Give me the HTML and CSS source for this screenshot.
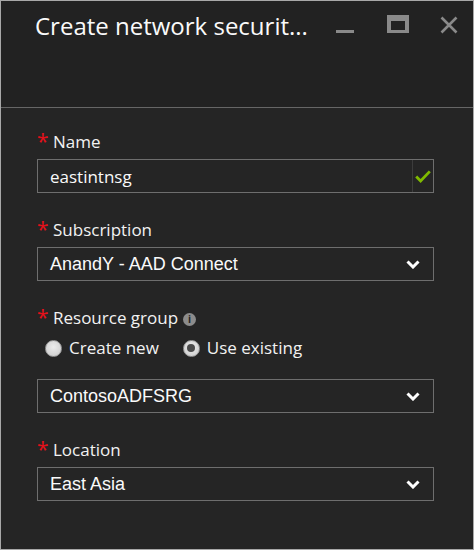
FILE: index.html
```html
<!DOCTYPE html>
<html lang="en">
<head>
<meta charset="utf-8">
<title>Create network security group</title>
<link rel="stylesheet" href="styles.css">
</head>
<body>
<div class="panel">
  <header class="header">
    <h1 class="title">Create network securit...</h1>
    <div class="controls">
      <svg class="ctl ctl-min" width="18" height="20" viewBox="0 0 18 20"><rect x="0" y="16" width="18" height="3" fill="#8a8a8a"/></svg>
      <svg class="ctl ctl-max" width="22" height="20" viewBox="0 0 22 20"><path d="M0 1h22v18H0z M4 7v9h14V7z" fill="#8a8a8a" fill-rule="evenodd"/></svg>
      <svg class="ctl ctl-close" width="18" height="20" viewBox="0 0 18 20"><path d="M1.5 3.5L16.5 18.5M16.5 3.5L1.5 18.5" stroke="#8a8a8a" stroke-width="2.6"/></svg>
    </div>
  </header>
  <main class="form">
    <div class="field">
      <label class="label"><span class="req">*</span>Name</label>
      <div class="box input">
        <span class="value name-value">eastintnsg</span>
        <span class="valid">
          <svg width="16" height="13" viewBox="0 0 16 13"><path d="M1.2 6.6L5.6 11L14.8 1.4" fill="none" stroke="#7fba00" stroke-width="2.8"/></svg>
        </span>
      </div>
    </div>
    <div class="field">
      <label class="label"><span class="req">*</span>Subscription</label>
      <div class="box select">
        <span class="value">AnandY - AAD Connect</span>
        <svg class="chev" width="14" height="9" viewBox="0 0 14 9"><path d="M1.5 1.5L7 7L12.5 1.5" fill="none" stroke="#fff" stroke-width="3"/></svg>
      </div>
    </div>
    <div class="field">
      <label class="label"><span class="req">*</span>Resource group<span class="info">i</span></label>
      <div class="radios">
        <span class="radio"><span class="dot"></span>Create new</span>
        <span class="radio checked"><span class="dot"></span>Use existing</span>
      </div>
      <div class="box select">
        <span class="value">ContosoADFSRG</span>
        <svg class="chev" width="14" height="9" viewBox="0 0 14 9"><path d="M1.5 1.5L7 7L12.5 1.5" fill="none" stroke="#fff" stroke-width="3"/></svg>
      </div>
    </div>
    <div class="field">
      <label class="label"><span class="req">*</span>Location</label>
      <div class="box select">
        <span class="value">East Asia</span>
        <svg class="chev" width="14" height="9" viewBox="0 0 14 9"><path d="M1.5 1.5L7 7L12.5 1.5" fill="none" stroke="#fff" stroke-width="3"/></svg>
      </div>
    </div>
  </main>
</div>
</body>
</html>
```
FILE: styles.css
```css
* { box-sizing: border-box; }
html, body { margin: 0; padding: 0; background: #252525; }
body { font-family: "Open Sans", "Noto Sans", sans-serif; color: #f2f2f2; }

.panel {
  width: 474px;
  height: 550px;
  border: 1px solid #a8a8a8;
  background: #252525;
  overflow: hidden;
}

.header {
  height: 107px;
  background: #222222;
  border-bottom: 1px solid #666;
  display: flex;
  align-items: flex-start;
  padding: 9px 15px 0 34px;
}
.title {
  flex: 1;
  margin: 0;
  font-size: 24px;
  font-weight: 400;
  line-height: 32px;
  color: #fafafa;
  white-space: nowrap;
}
.controls {
  display: flex;
  align-items: flex-start;
  margin-top: 4px;
}
.ctl { display: block; }
.ctl-max { margin-left: 33px; }
.ctl-close { margin-left: 31px; }

.form {
  padding: 23px 39px 0 36px;
}
.field { margin-bottom: 26px; }
.label {
  display: block;
  font-size: 17px;
  line-height: 22px;
  margin-bottom: 6px;
  color: #f2f2f2;
}
.req {
  display: inline-block;
  width: 16px;
  color: #e5101a;
  font-size: 21px;
  line-height: 0;
  position: relative;
  top: 1px;
}
.info {
  display: inline-block;
  width: 13px;
  height: 13px;
  border-radius: 50%;
  background: #8c8c8c;
  color: #262626;
  font-size: 10px;
  font-weight: 700;
  line-height: 13px;
  text-align: center;
  margin-left: 5px;
  vertical-align: 1px;
}

.box {
  height: 34px;
  border: 1px solid #6e6e6e;
  display: flex;
  align-items: center;
  padding-left: 12px;
}
.value { flex: 1; white-space: nowrap; color: #fafafa; }
.name-value { font-size: 17px; }
.input { padding-right: 0; }
.valid {
  width: 21px;
  height: 100%;
  border-left: 1px solid #3c3c3c;
  display: flex;
  align-items: center;
  justify-content: center;
}
.valid svg { display: block; }

.select { padding-right: 13px; }
.select .value {
  font-family: "Liberation Sans", Arial, sans-serif;
  font-size: 18px;
}
.chev { display: block; }

.radios {
  display: flex;
  align-items: center;
  font-size: 17px;
  line-height: 22px;
  margin: -6px 0 20px 8px;
  padding-top: 8px;
}
.radio {
  display: inline-flex;
  align-items: center;
  margin-right: 24px;
}
.dot {
  width: 17px;
  height: 17px;
  border-radius: 50%;
  background: radial-gradient(circle at 50% 40%, #ececec, #c9c9c9);
  border: 1px solid #9a9a9a;
  margin-right: 7px;
  position: relative;
}
.checked .dot::after {
  content: "";
  position: absolute;
  left: 3.5px;
  top: 3.5px;
  width: 8px;
  height: 8px;
  border-radius: 50%;
  background: #4a4a4a;
}
```
